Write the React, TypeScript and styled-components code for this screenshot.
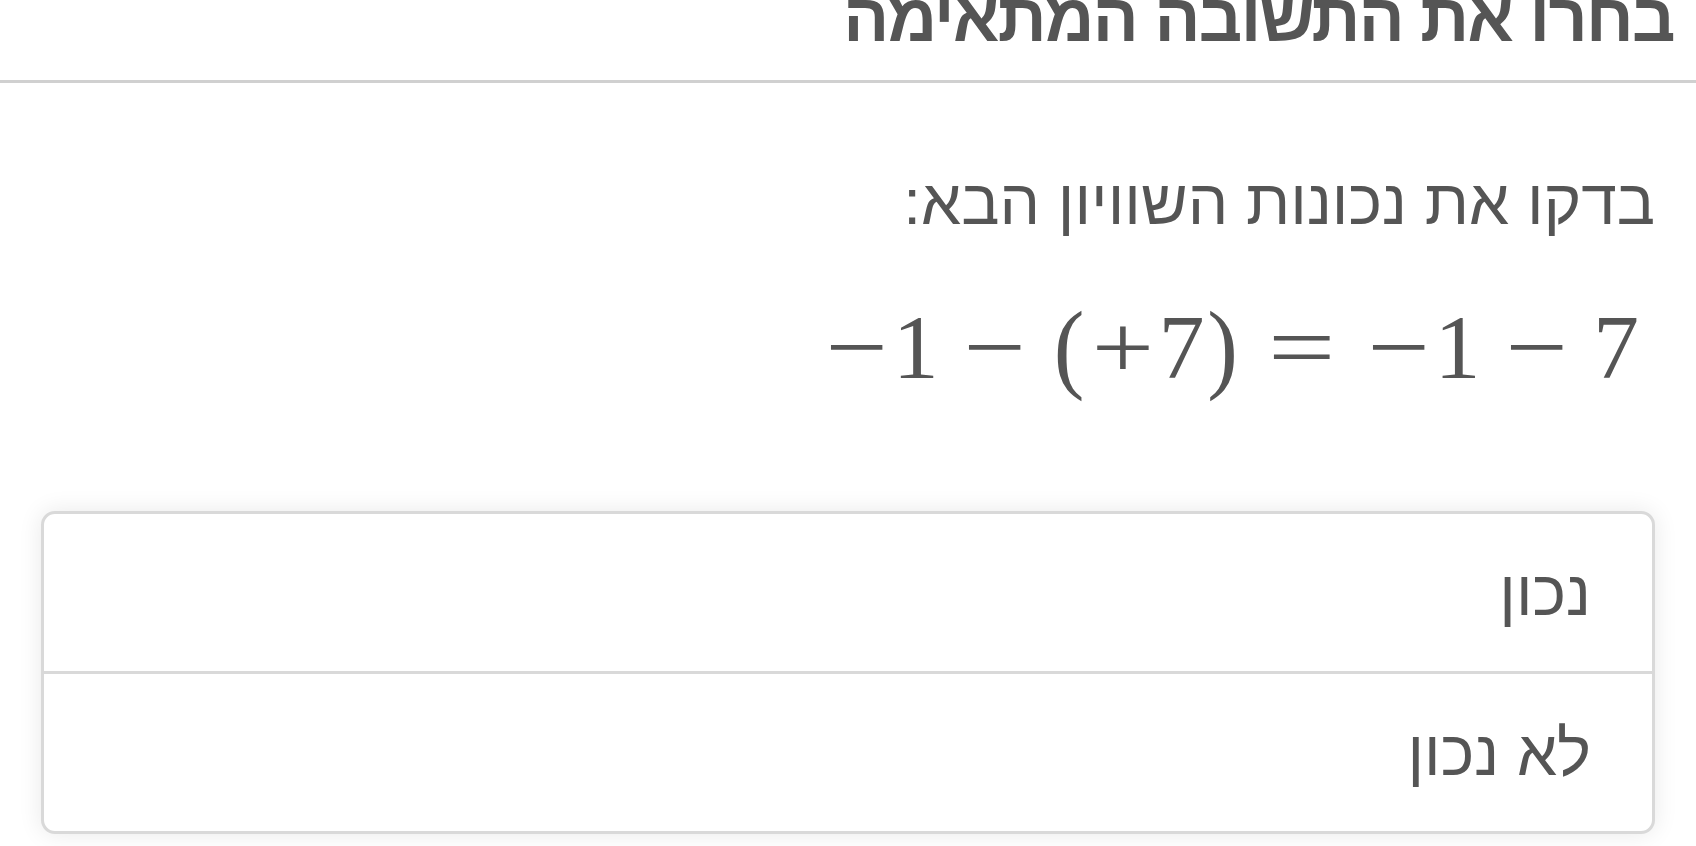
import React from "react";
import styled, { createGlobalStyle } from "styled-components";

const GlobalStyle = createGlobalStyle`
  html, body {
    margin: 0;
    padding: 0;
    background: #ffffff;
  }
  body {
    font-family: "Liberation Sans", "DejaVu Sans", sans-serif;
    color: #555555;
    overflow: hidden;
  }
`;

const Page = styled.div`
  direction: rtl;
  width: 100%;
  min-height: 846px;
  display: flex;
  flex-direction: column;
`;

const Header = styled.header`
  display: flex;
  padding: 0 22px;
  height: 80px;
  border-bottom: 3px solid #d0d0d0;
`;

const Title = styled.h1`
  margin: -17px 0 0 0;
  font-size: 68px;
  line-height: 68px;
  font-weight: 700;
  letter-spacing: -1.6px;
  color: #555555;
  white-space: nowrap;
`;

const Body = styled.main`
  display: flex;
  flex-direction: column;
  padding: 0 41px;
`;

const Prompt = styled.p`
  margin: 79px 0 0 0;
  font-size: 64px;
  line-height: 80px;
  color: #555555;
  text-align: right;
`;

const Formula = styled.div`
  direction: ltr;
  display: flex;
  justify-content: flex-end;
  align-items: baseline;
  margin-top: 50px;
  padding-right: 16px;
  font-family: "Liberation Serif", "DejaVu Serif", serif;
  font-size: 92px;
  line-height: 110px;
  color: #555555;
`;

const Glyph = styled.span<{ $w: number; $gap: number; $sx: number; $sy: number }>`
  display: inline-block;
  width: ${({ $w }) => $w}em;
  margin-right: ${({ $gap }) => $gap}em;
  text-align: center;
  transform: scale(${({ $sx }) => $sx}, ${({ $sy }) => $sy});
`;

const Options = styled.ul`
  list-style: none;
  margin: 109px 0 0 0;
  padding: 0;
  border: 3px solid #d9d9d9;
  border-radius: 14px;
  box-shadow: 0 0 24px rgba(0, 0, 0, 0.09);
  background: #ffffff;
  overflow: hidden;
`;

const Option = styled.li`
  display: flex;
  align-items: center;
  height: 157px;
  padding: 0 61px;
  font-size: 64px;
  color: #555555;
  & + & {
    border-top: 3px solid #d9d9d9;
  }
`;

type Tok = { t: string; w: number; gap?: number; sx?: number; sy?: number };

// box widths are Computer Modern advances, gaps are TeX med/thick spaces;
// operators get stretched out to the wider CM shapes
const minus = (gap?: number): Tok => ({ t: "\u2212", w: 0.778, gap, sx: 1.2 });

const equation: Array<Tok> = [
  minus(),
  { t: "1", w: 0.5, gap: 0.222 },
  minus(0.222),
  { t: "(", w: 0.389, sy: 1.08 },
  { t: "+", w: 0.778, sx: 1.2 },
  { t: "7", w: 0.5 },
  { t: ")", w: 0.389, gap: 0.278, sy: 1.08 },
  { t: "=", w: 0.778, gap: 0.278, sx: 1.3 },
  minus(),
  { t: "1", w: 0.5, gap: 0.222 },
  minus(0.222),
  { t: "7", w: 0.5 },
];

const answers: Array<string> = ["נכון", "לא נכון"];

export default function App() {
  return (
    <>
      <GlobalStyle />
      <Page>
        <Header>
          <Title>בחרו את התשובה המתאימה</Title>
        </Header>
        <Body>
          <Prompt>בדקו את נכונות השוויון הבא:</Prompt>
          <Formula>
            {equation.map((g, i) => (
              <Glyph key={i} $w={g.w} $gap={g.gap ?? 0} $sx={g.sx ?? 1} $sy={g.sy ?? 1}>
                {g.t}
              </Glyph>
            ))}
          </Formula>
          <Options>
            {answers.map((a) => (
              <Option key={a}>{a}</Option>
            ))}
          </Options>
        </Body>
      </Page>
    </>
  );
}
